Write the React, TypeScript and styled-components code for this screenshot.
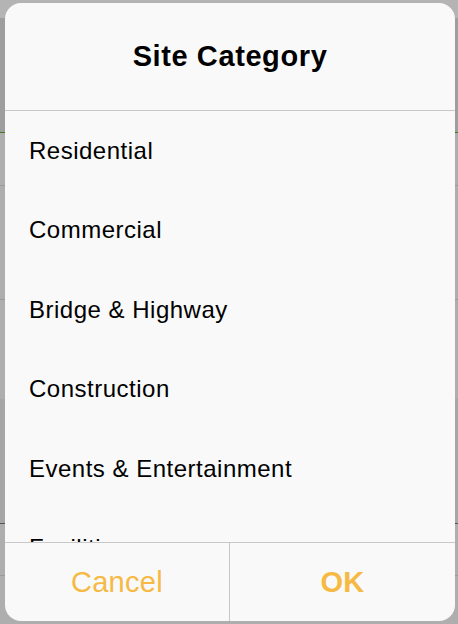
import styled, { createGlobalStyle } from 'styled-components';

const GlobalStyle = createGlobalStyle`
  html, body {
    margin: 0;
    padding: 0;
  }
  body {
    font-family: 'Liberation Sans', Arial, Helvetica, sans-serif;
    background: #aeaeae;
  }
`;

const categories = [
  'Residential',
  'Commercial',
  'Bridge & Highway',
  'Construction',
  'Events & Entertainment',
  'Facilities',
];

// dimmed page behind the dialog
const Screen = styled.div`
  position: relative;
  width: 458px;
  height: 624px;
  overflow: hidden;
  display: flex;
  flex-direction: column;
  background: #aeaeae;
`;

const PageBand = styled.div<{ h: number; bg?: string; line?: string }>`
  flex: 0 0 ${(props) => props.h}px;
  background: ${(props) => props.bg || '#aeaeae'};
  border-bottom: 1px solid ${(props) => props.line || 'transparent'};
`;

const Dialog = styled.div`
  position: absolute;
  left: 5px;
  top: 3px;
  width: 450px;
  height: 618px;
  border-radius: 16px;
  background: #f9f9f9;
  overflow: hidden;
  display: flex;
  flex-direction: column;
`;

const Header = styled.div`
  flex: 0 0 107px;
  display: flex;
  align-items: center;
  justify-content: center;
  border-bottom: 1px solid #c8c8c8;
`;

const Title = styled.h1`
  margin: 0;
  font-size: 29px;
  font-weight: 700;
  letter-spacing: 0.6px;
  color: #000;
`;

const List = styled.div`
  flex: 1 1 auto;
  overflow: hidden;
`;

const Option = styled.div`
  height: 79.5px;
  display: flex;
  align-items: center;
  padding-left: 24px;
  font-size: 24px;
  letter-spacing: 0.5px;
  color: #000;
`;

const Footer = styled.div`
  flex: 0 0 78px;
  display: grid;
  grid-template-columns: 224px 1fr;
  border-top: 1px solid #c8c8c8;
`;

const FooterButton = styled.button<{ primary?: boolean }>`
  border: none;
  border-left: ${(props) => (props.primary ? '1px solid #c8c8c8' : 'none')};
  background: transparent;
  padding: 0;
  font-family: inherit;
  font-size: 29px;
  font-weight: ${(props) => (props.primary ? 700 : 400)};
  letter-spacing: 0.3px;
  color: #f5b944;
  display: flex;
  align-items: center;
  justify-content: center;
`;

export default function App() {
  return (
    <Screen>
      <GlobalStyle />
      <PageBand h={17} bg="#b4b4b4" />
      <PageBand h={114} bg="#9e9e9e" line="#3f7a22" />
      <PageBand h={52} line="#9a9a9a" />
      <PageBand h={113} line="#9a9a9a" />
      <PageBand h={98} />
      <PageBand h={124} bg="#a6a6a6" line="#555555" />
      <PageBand h={51} line="#9a9a9a" />
      <Dialog>
        <Header>
          <Title>Site Category</Title>
        </Header>
        <List>
          {categories.map((c) => (
            <Option key={c}>{c}</Option>
          ))}
        </List>
        <Footer>
          <FooterButton>Cancel</FooterButton>
          <FooterButton primary>OK</FooterButton>
        </Footer>
      </Dialog>
    </Screen>
  );
}
